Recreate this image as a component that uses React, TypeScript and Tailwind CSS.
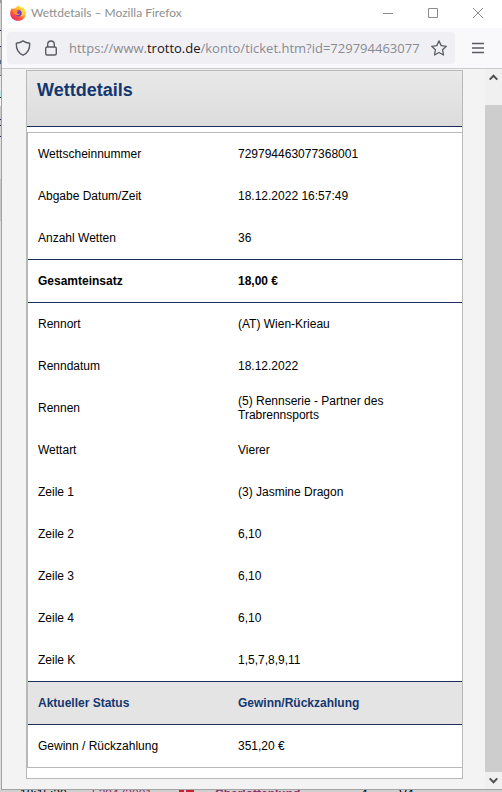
import type { ReactNode } from "react";

const betRows = [
  { label: "Wettscheinnummer", value: "729794463077368001" },
  { label: "Abgabe Datum/Zeit", value: "18.12.2022 16:57:49" },
  { label: "Anzahl Wetten", value: "36" },
];

const raceRows = [
  { label: "Rennort", value: "(AT) Wien-Krieau" },
  { label: "Renndatum", value: "18.12.2022" },
  { label: "Rennen", value: "(5) Rennserie - Partner des Trabrennsports" },
  { label: "Wettart", value: "Vierer" },
  { label: "Zeile 1", value: "(3) Jasmine Dragon" },
  { label: "Zeile 2", value: "6,10" },
  { label: "Zeile 3", value: "6,10" },
  { label: "Zeile 4", value: "6,10" },
  { label: "Zeile K", value: "1,5,7,8,9,11" },
];

// slices of the page behind, visible left of the window
const backdropSlices = [
  "h-[3px] bg-[#9a9a9a]",
  "h-[27px] bg-[#d6d6d6]",
  "h-px bg-[#1d2c55]",
  "h-[15px] bg-[#e6e6e6]",
  "h-px bg-[#1d2c55]",
  "h-[13px] bg-[#c8c8c8]",
  "h-1 bg-[#5b6685]",
  "h-[11px] bg-[#c8c8c8]",
  "h-px bg-[#6b6b6b]",
  "h-[15px] bg-[#e9e9e9]",
  "h-[6px] bg-[#bfe6e6]",
  "h-px bg-[#222222]",
  "h-[8px] bg-[#f5f5f5]",
  "h-[13px] bg-[#c9c9c9]",
  "h-px bg-[#1d2c55]",
  "h-[5px] bg-[#c9c9c9]",
  "h-px bg-[#1d2c55]",
  "h-[10px] bg-[#d2d2d2]",
  "h-px bg-[#1d2c55]",
  "h-[42px] bg-[#dedede]",
  "h-[42px] bg-[#c6c6c6]",
  "grow bg-[#dedede]",
];

function FirefoxLogo() {
  return (
    <svg viewBox="0 0 16 16" className="size-4 shrink-0" aria-hidden>
      <defs>
        <linearGradient id="fox" x1="0.85" y1="0.1" x2="0.2" y2="0.95">
          <stop offset="0" stopColor="#fff04a" />
          <stop offset="0.35" stopColor="#ffb52e" />
          <stop offset="0.65" stopColor="#ff5a3c" />
          <stop offset="1" stopColor="#e3206e" />
        </linearGradient>
      </defs>
      <path
        d="M8.6.2c.6 1.2 2.2 1.9 3 3.1.3-.3.3-.8.2-1.2 2.4 1.3 4 3.7 4 6.3 0 4.2-3.4 7.4-7.7 7.4S.2 12.5.2 8.500c0-2.2.7-4.2 2-5.7 0 .5.1.9.4 1.200.6-.4 1.4-.5 2.2-.3C5.7 2 7.4 1.8 8.6.2Z"
        fill="url(#fox)"
      />
      <circle cx="8.300" cy="8.300" r="3.300" fill="#7a3bd0" />
      <path
        d="M2.7 4.700c1.700-.8 3.400-.3 4.200.7h1.800c-.2.900-1.100 1.200-1.900 1.700.2 1.700 1.700 2.200 3.400 1.500-1 2-4.300 2.200-5.600.1-1-.1-2-1.600-1.900-4Z"
        fill="#ff8a2a"
      />
      <path
        d="M8.600.2c.6 2.200 3.600 3.100 4 6.300.2 2.200-.8 4-2.400 4.800 2.800-.2 4.600-2.200 4.600-4.600 0-2-.9-3.600-3-4.600.1.400.1.900-.2 1.200C10.800 2.100 9.200 1.400 8.600.2Z"
        fill="#ffdd3c"
      />
    </svg>
  );
}

function WindowButton({ label, children }: { label: string; children: ReactNode }) {
  return (
    <button type="button" aria-label={label} className="h-6 w-8">
      <svg viewBox="0 0 32 22" className="h-[22px] w-8" fill="none" stroke="#8c8c8c">
        {children}
      </svg>
    </button>
  );
}

function TitleBar() {
  return (
    <header className="flex h-7 items-center bg-white pb-[3px] pl-2">
      <FirefoxLogo />
      <h1 className="ml-[5px] grow font-['Lato',sans-serif] text-[12px] leading-4 text-[#8f8f8f]">
        Wettdetails – Mozilla Firefox
      </h1>
      <div className="flex gap-[13px] pr-2">
        <WindowButton label="Minimieren">
          <path d="M11 11.500h10" />
        </WindowButton>
        <WindowButton label="Maximieren">
          <path d="M11.500 6.500h9v9h-9z" />
        </WindowButton>
        <WindowButton label="Schließen">
          <path d="m11 6 10 10M21 6 11 16" />
        </WindowButton>
      </div>
    </header>
  );
}

function AddressBar() {
  return (
    <div className="flex h-[41px] items-center border-b border-[#cccccc] bg-[#f9f9fb] pl-[5px]">
      <div className="flex h-8 min-w-0 grow items-center rounded bg-[#f0f0f4] px-2">
        <button type="button" aria-label="Schutz" className="shrink-0">
          <svg viewBox="0 0 16 16" className="size-4" fill="none" stroke="#5b5b66" strokeWidth="1.400" strokeLinejoin="round">
            <path d="M8 .9c2 1.500 4.300 2.200 6.700 2.300.2 5.700-1.900 9.900-6.700 12C3.200 13.100 1.100 8.900 1.300 3.200 3.700 3.100 6 2.400 8 .9Z" />
          </svg>
        </button>
        <button type="button" aria-label="Verbindung sicher" className="ml-3 shrink-0">
          <svg viewBox="0 0 16 16" className="size-4" fill="none" stroke="#5b5b66" strokeWidth="1.400">
            <rect x="2.700" y="7" width="10.600" height="8" rx="1.500" />
            <path d="M4.700 7V4.300a3.300 3.300 0 0 1 6.600 0V7" />
          </svg>
        </button>
        <a
          href="#"
          className="ml-[10px] min-w-0 grow whitespace-nowrap font-['Open_Sans',sans-serif] text-[13px] leading-5 text-[#8a8a91]"
        >
          https://www.<span className="text-[#15141a]">trotto.de</span>/konto/ticket.htm?id=729794463077
        </a>
        <button type="button" aria-label="Lesezeichen" className="shrink-0">
          <svg viewBox="0 0 16 16" className="size-4" fill="none" stroke="#5b5b66" strokeWidth="1.300" strokeLinejoin="round">
            <path d="m8 .9 2.200 4.700 5.100.7-3.700 3.500.9 5.200L8 12.500 3.500 15l.9-5.200L.7 6.300l5.100-.7L8 .9Z" />
          </svg>
        </button>
      </div>
      <button type="button" aria-label="Menü" className="ml-4 mr-[17px] shrink-0">
        <svg viewBox="0 0 14 16" className="h-4 w-[14px]" stroke="#5b5b66" strokeWidth="1.300">
          <path d="M1 3.500h12M1 8h12M1 12.500h12" />
        </svg>
      </button>
    </div>
  );
}

function DetailRow({ label, value }: { label: string; value: string }) {
  return (
    <tr className="h-[42px]">
      <th scope="row" className="w-[200px] pl-[10px] text-left font-normal">
        {label}
      </th>
      <td className="pl-[10px] pr-12">{value}</td>
    </tr>
  );
}

function HighlightRow({ label, value, tone }: { label: string; value: string; tone: string }) {
  return (
    <tr className={`h-11 font-bold ${tone}`}>
      <th scope="row" className="border-y border-[#1b2f5a] pl-[10px] text-left">
        {label}
      </th>
      <td className="border-y border-[#1b2f5a] pl-[10px]">{value}</td>
    </tr>
  );
}

function TicketTable() {
  return (
    <table className="w-full border-separate border-spacing-0 border-y border-l border-[#b8b8b8] text-[12px] leading-[14px] text-black">
      <tbody>
        {betRows.map((row) => (
          <DetailRow key={row.label} {...row} />
        ))}
        <HighlightRow label="Gesamteinsatz" value="18,00 €" tone="text-black" />
        {raceRows.map((row) => (
          <DetailRow key={row.label} {...row} />
        ))}
        <HighlightRow
          label="Aktueller Status"
          value="Gewinn/Rückzahlung"
          tone="bg-[#e4e4e4] text-[#14376f]"
        />
        <DetailRow label="Gewinn / Rückzahlung" value="351,20 €" />
      </tbody>
    </table>
  );
}

function ScrollBar() {
  return (
    <div className="flex w-[17px] shrink-0 flex-col bg-[#f0f0f0]">
      <button type="button" aria-label="Nach oben" className="flex h-[17px] items-center justify-center">
        <svg viewBox="0 0 9 7" className="h-[7px] w-[9px]" fill="none" stroke="#505050" strokeWidth="2">
          <path d="m.7 5.600 3.800-3.900 3.800 3.900" />
        </svg>
      </button>
      <div className="mt-[19px] grow bg-[#cdcdcd]" />
      <button type="button" aria-label="Nach unten" className="flex h-[17px] items-center justify-center">
        <svg viewBox="0 0 9 7" className="h-[7px] w-[9px]" fill="none" stroke="#505050" strokeWidth="2">
          <path d="m.7 1.400 3.800 3.900 3.800-3.900" />
        </svg>
      </button>
    </div>
  );
}

// top edge of the race list that lies under the window
function BackdropRow() {
  return (
    <footer className="flex h-[2px] shrink-0 overflow-hidden pl-5 text-[12px] leading-[8px]" aria-hidden>
      <span className="w-[72px]">18:15:20</span>
      <span className="w-[87px] text-[#8a2f5f]">529473001</span>
      <span className="flex w-9">
        <span className="h-[2px] w-[5px] bg-[#c8202f]" />
        <span className="ml-[2px] h-[2px] w-2 bg-[#c8202f]" />
      </span>
      <span className="w-[146px] font-bold text-[#8a2f5f]">Charlottenlund</span>
      <span className="w-[38px]">4</span>
      <span>V4</span>
    </footer>
  );
}

export default function App() {
  return (
    <div className="flex h-screen flex-col overflow-hidden bg-[#d0d0d0] font-['Liberation_Sans',Arial,sans-serif]">
      <div className="flex grow">
        <div className="flex w-px shrink-0 flex-col">
          {backdropSlices.map((slice, i) => (
            <div key={i} className={slice} />
          ))}
        </div>
        <div className="flex min-w-0 grow flex-col border-b border-l border-[#a3a3a3] bg-[#f3f3f3]">
          <TitleBar />
          <AddressBar />
          <div className="flex grow">
            <main className="min-w-0 grow pl-6 pr-[22px] pt-px">
              <section className="border border-[#b8b8b8] bg-white pb-[10px]">
                <h2 className="mb-[5px] h-14 border-b border-[#1b2f5a] bg-linear-to-b from-[#e9e9e9] to-[#dcdcdc] pl-[10px] pt-2 text-[18px] leading-[22px] font-bold text-[#14376f]">
                  Wettdetails
                </h2>
                <TicketTable />
              </section>
            </main>
            <ScrollBar />
          </div>
        </div>
      </div>
      <BackdropRow />
    </div>
  );
}
